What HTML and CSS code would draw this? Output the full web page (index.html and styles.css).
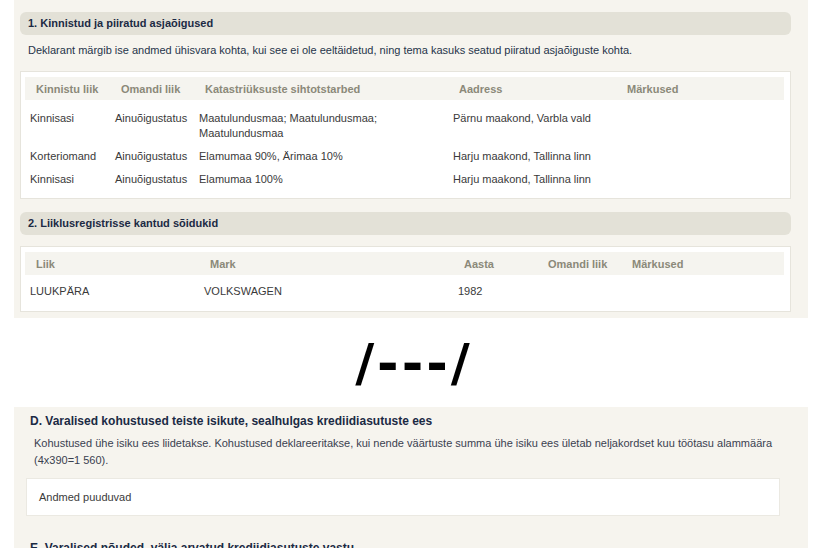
FILE: index.html
```html
<!DOCTYPE html>
<html lang="et">
<head>
<meta charset="utf-8">
<title>Deklaratsioon</title>
<link rel="stylesheet" href="styles.css">
</head>
<body>
<section class="panel">
  <div class="sec-head">1. Kinnistud ja piiratud asjaõigused</div>
  <p class="sec-desc">Deklarant märgib ise andmed ühisvara kohta, kui see ei ole eeltäidetud, ning tema kasuks seatud piiratud asjaõiguste kohta.</p>
  <div class="tbox">
    <div class="trow thead cols-a">
      <div>Kinnistu liik</div><div>Omandi liik</div><div>Katastriüksuste sihtotstarbed</div><div>Aadress</div><div>Märkused</div>
    </div>
    <div class="tbody">
      <div class="trow cols-a">
        <div>Kinnisasi</div><div>Ainuõigustatus</div><div>Maatulundusmaa; Maatulundusmaa;<br>Maatulundusmaa</div><div>Pärnu maakond, Varbla vald</div><div></div>
      </div>
      <div class="trow cols-a">
        <div>Korteriomand</div><div>Ainuõigustatus</div><div>Elamumaa 90%, Ärimaa 10%</div><div>Harju maakond, Tallinna linn</div><div></div>
      </div>
      <div class="trow cols-a">
        <div>Kinnisasi</div><div>Ainuõigustatus</div><div>Elamumaa 100%</div><div>Harju maakond, Tallinna linn</div><div></div>
      </div>
    </div>
  </div>

  <div class="sec-head sec-head-2">2. Liiklusregistrisse kantud sõidukid</div>
  <div class="tbox tbox-2">
    <div class="trow thead cols-b">
      <div>Liik</div><div>Mark</div><div>Aasta</div><div>Omandi liik</div><div>Märkused</div>
    </div>
    <div class="tbody tbody-2">
      <div class="trow cols-b">
        <div>LUUKPÄRA</div><div>VOLKSWAGEN</div><div>1982</div><div></div><div></div>
      </div>
    </div>
  </div>
</section>

<div class="cut">/---/</div>

<section class="panel panel-b">
  <h2 class="b-title">D. Varalised kohustused teiste isikute, sealhulgas krediidiasutuste ees</h2>
  <p class="b-desc">Kohustused ühe isiku ees liidetakse. Kohustused deklareeritakse, kui nende väärtuste summa ühe isiku ees ületab neljakordset kuu töötasu alammäära (4x390=1 560).</p>
  <div class="empty-box">Andmed puuduvad</div>
  <h2 class="b-title b-title-e">E. Varalised nõuded, välja arvatud krediidiasutuste vastu</h2>
</section>
</body>
</html>
```

FILE: styles.css
```css
* { box-sizing: border-box; }

html, body {
  margin: 0;
  padding: 0;
  background: #ffffff;
  font-family: "Liberation Sans", Arial, sans-serif;
  font-size: 11px;
  color: #333333;
  overflow: hidden;
}

.panel {
  width: 794px;
  margin-left: 14px;
  background: #f6f4ee;
  padding: 12px 17px 6px 6px;
}

.sec-head {
  height: 23px;
  line-height: 23px;
  background: #e3e1d7;
  border-radius: 6px;
  padding-left: 8px;
  font-weight: bold;
  font-size: 11px;
  color: #1b2a44;
}

.sec-head-2 {
  margin-top: 13px;
}

.sec-desc {
  margin: 8px 0 0 8px;
  line-height: 14px;
  color: #26344a;
}

.tbox {
  margin-top: 14px;
  background: #ffffff;
  border: 1px solid #e6e4dc;
  padding: 5px 6px 7px 4px;
}

.tbox-2 {
  margin-top: 11px;
  padding-bottom: 8px;
}

.trow {
  display: grid;
}

.cols-a { grid-template-columns: 85px 84px 254px 168px 1fr; }
.cols-b { grid-template-columns: 174px 254px 84px 84px 1fr; }

.thead {
  height: 23px;
  align-items: center;
  background: #f5f4ef;
  font-weight: bold;
  color: #8b8979;
}

.thead > div {
  padding-left: 11px;
}

.tbody {
  padding-top: 7px;
}

.tbody-2 {
  padding-top: 5px;
}

.tbody .trow {
  padding: 4px 0;
  line-height: 15px;
  color: #3a3a3a;
}

.tbody .trow > div {
  padding-left: 5px;
}

.cut {
  height: 89px;
  display: flex;
  align-items: center;
  justify-content: center;
  font-family: "DejaVu Sans", sans-serif;
  font-weight: bold;
  font-size: 52px;
  letter-spacing: 3px;
  color: #000000;
  padding-left: 8px;
}

.panel-b {
  padding: 6px 28px 20px 12px;
  height: 143px;
}

.b-title {
  margin: 0 0 0 4px;
  font-size: 12px;
  line-height: 16px;
  font-weight: bold;
  color: #1b2a44;
}

.b-desc {
  margin: 6px 0 0 8px;
  line-height: 17px;
  color: #3a4150;
}

.empty-box {
  margin-top: 9px;
  height: 38px;
  line-height: 36px;
  background: #ffffff;
  border: 1px solid #ebe9e2;
  padding-left: 12px;
  color: #3a3a3a;
}

.b-title-e {
  margin-top: 24px;
}
```
